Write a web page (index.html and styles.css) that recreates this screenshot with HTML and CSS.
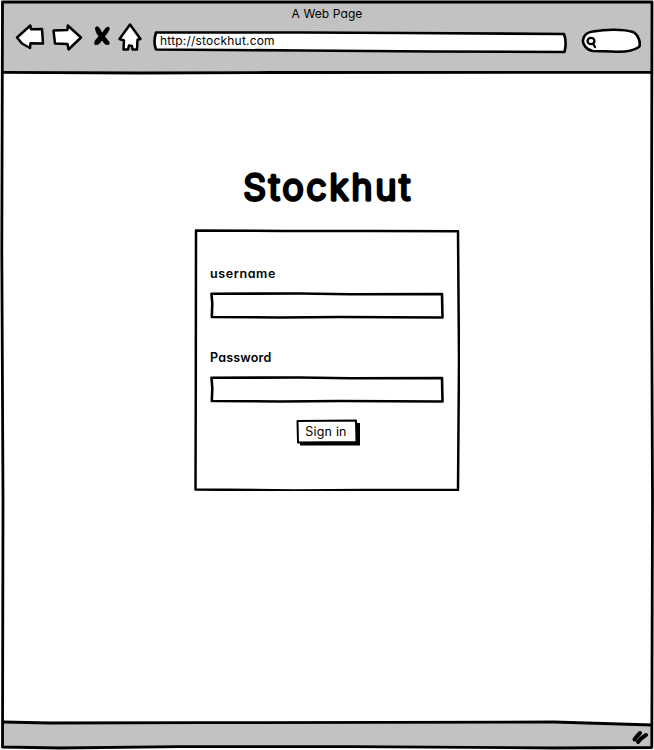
FILE: index.html
```html
<!DOCTYPE html>
<html lang="en">
<head>
<meta charset="utf-8">
<title>A Web Page</title>
<link rel="stylesheet" href="styles.css">
</head>
<body>
<div class="window">
  <svg class="sketch" viewBox="0 0 654 750">
    <path class="bar" d="M2 2H652V73L420 72L230 73L2 72Z"/>
    <path class="bar" d="M2 722L300 723L554 722.500L652 725V748H2Z"/>
    <path class="line" d="M2.500 2L652 2L651.500 250L652.500 500L651.800 747.500L554 748L350 746.700L180 746.700L60 748L2.500 747L3 500L1.800 250Z"/>
    <path class="line" d="M3 72.300L140 73L270 72.500L580 72.300L652 72.300M3 722L50 723L200 722.700L554 722L652 725"/>
  </svg>
  <header class="header">
    <div class="title">A Web Page</div>
    <div class="toolbar">
      <svg class="nav" viewBox="0 0 145 32">
        <path class="icon" d="M17 15.500L30.300 3.500L31 7.300L42 7L43 21.500L30.500 21.300L30 26L22 21.500Z"/>
        <path class="icon" d="M53.500 8.500L67.500 8L67.800 3.500L81 15.500L68.500 27.500L67.500 22L55 21.500Z"/>
        <path class="cross" d="M95 6Q97 2.500 99.500 6L102.300 10.500L105.500 6Q109.500 3.500 109.700 6.500Q109.500 9 105 14.500L109.500 20Q110 23.500 107 23Q105 23 102 18.500Q98 24.500 94.500 22.500Q93 19.500 98.500 14.500Q95 9.500 95 6Z"/>
        <path class="icon" d="M130 2.500L140.500 17L137.500 17.800L137 27.500L132.500 27.500L132 24L129 23.500L128 27.500L123.500 27.500L124 18.500L119.500 17Z"/>
      </svg>
      <div class="address">
        <svg class="sketch" viewBox="0 0 414 24"><path class="box" d="M3 2.500L150 2.500L250 3L411 4Q414 12 411.500 22L280 21.500L150 20.500L3 19.500Q0 12 3 2.500Z"/></svg>
        <span>http://stockhut.com</span>
      </div>
      <svg class="search" viewBox="0 0 60 26">
        <path class="box" d="M12 3.500C25 1 43 1 52 4C58 7 60 16 58 19C52 23 43 24.500 31 23.500L12 23C5 22 1.500 16 2 12C2.500 7 7 4 12 3.500Z"/>
        <ellipse class="lens" cx="10" cy="13" rx="3.500" ry="3.200"/><path class="lens" d="M12 15.500L14 19"/>
      </svg>
    </div>
  </header>
  <main class="content">
    <h1 class="brand"><svg viewBox="0 0 180 50"><text x="6.500" y="37.300" textLength="166.500">Stockhut</text></svg></h1>
    <form class="login">
      <svg class="sketch" viewBox="0 0 266 262"><path class="panel-line" d="M2 1.500L90 2L180 2L264 2.300L265 130L264 261L170 261L100 261.500L1.500 260.500L1.800 150Z"/></svg>
      <label class="label" for="user"><span class="wide">username</span></label>
      <div class="field">
        <svg class="sketch" viewBox="0 0 234 27"><path class="box" d="M1.500 1.800L90 1.500L140 2.200L232 2L232.500 25.500L130 25L70 25.500L1.800 25L2.300 12Z"/></svg>
        <input id="user" type="text">
      </div>
      <label class="label" for="pass">Password</label>
      <div class="field">
        <svg class="sketch" viewBox="0 0 234 27"><path class="box" d="M1.500 1.800L90 1.500L140 2.200L232 2L232.500 25.500L130 25L70 25.500L1.800 25L2.300 12Z"/></svg>
        <input id="pass" type="password">
      </div>
      <button class="signin" type="button">
        <svg class="sketch" viewBox="0 0 65 27"><path d="M4 4H64V26.500H4Z"/><path class="button-face" d="M1.500 2L60 1.500L60.500 23L2 23.500Z"/></svg>
        <span>Sign in</span>
      </button>
    </form>
  </main>
  <footer class="footer">
    <svg class="grip" viewBox="0 0 18 16"><path d="M3.500 10.500Q6 7 9 4M7 13Q10 9 15 6"/></svg>
  </footer>
</div>
</body>
</html>
```
FILE: styles.css
```css
* { box-sizing: border-box; }
body {
  margin: 0;
  background: #fff;
  color: #000;
  font: 12.5px/16px Inter, sans-serif;
  font-feature-settings: "cv11";
}
.window {
  position: relative;
  display: flex;
  flex-direction: column;
  width: 654px;
  height: 750px;
  overflow: hidden;
}
.sketch {
  position: absolute;
  inset: 0;
  width: 100%;
  height: 100%;
}
.bar { fill: #c2c2c2; }
.line, .panel-line { fill: none; stroke: #000; stroke-width: 2.8; stroke-linejoin: round; }
.panel-line { stroke-width: 2.5; }
.box { fill: #fff; stroke: #000; stroke-width: 2.6; stroke-linejoin: round; }
.icon { fill: #fff; stroke: #000; stroke-width: 2.5; stroke-linejoin: round; }
.cross { fill: #000; }
.lens { fill: none; stroke: #000; stroke-width: 2.3; stroke-linecap: round; }
.button-face { fill: #fff; stroke: #000; stroke-width: 2; stroke-linejoin: round; }
.header { position: relative; height: 73px; padding-top: 6px; }
.title { text-align: center; font-size: 12px; letter-spacing: .1px; }
.toolbar { display: flex; align-items: flex-start; }
.nav { width: 145px; height: 32px; }
.address { position: relative; width: 414px; height: 24px; margin: 8px 0 0 8px; padding: 3px 7px; }
.address span { position: relative; font-size: 12px; letter-spacing: .2px; }
.search { width: 60px; height: 26px; margin: 6px 0 0 14px; }
.content {
  position: relative;
  flex: 1;
  display: flex;
  flex-direction: column;
  align-items: center;
  padding-top: 90px;
}
.brand {
  margin: 0;
  width: 180px;
  height: 66px;
  font-size: 35.5px;
  font-weight: 300;
}
.brand svg { display: block; width: 180px; height: 50px; overflow: visible; }
.brand text { stroke: #000; stroke-width: 3.3; stroke-linejoin: round; stroke-linecap: round; }
.login {
  position: relative;
  display: flex;
  flex-direction: column;
  width: 266px;
  height: 262px;
  padding: 36px 16px 0;
}
.label { position: relative; height: 27px; padding-top: 1px; font-size: 12.5px; font-weight: 600; letter-spacing: .2px; }
.wide { letter-spacing: .6px; }
.field { position: relative; width: 234px; height: 27px; margin-bottom: 30px; }
.field input {
  position: relative;
  display: block;
  width: 100%;
  height: 100%;
  padding: 0 8px;
  border: 0;
  outline: 0;
  background: transparent;
}
.signin {
  position: relative;
  align-self: center;
  width: 65px;
  height: 27px;
  margin: -14px 0 0 2px;
  padding: 0 4px 2px 0;
  border: 0;
  background: transparent;
  color: #000;
  font: inherit;
  font-feature-settings: inherit;
}
.signin span { position: relative; letter-spacing: .2px; }
.footer { position: relative; display: flex; justify-content: flex-end; height: 28px; padding: 7px 5px 0 0; }
.grip { width: 18px; height: 16px; fill: none; stroke: #000; stroke-width: 4; stroke-linecap: round; }
```
